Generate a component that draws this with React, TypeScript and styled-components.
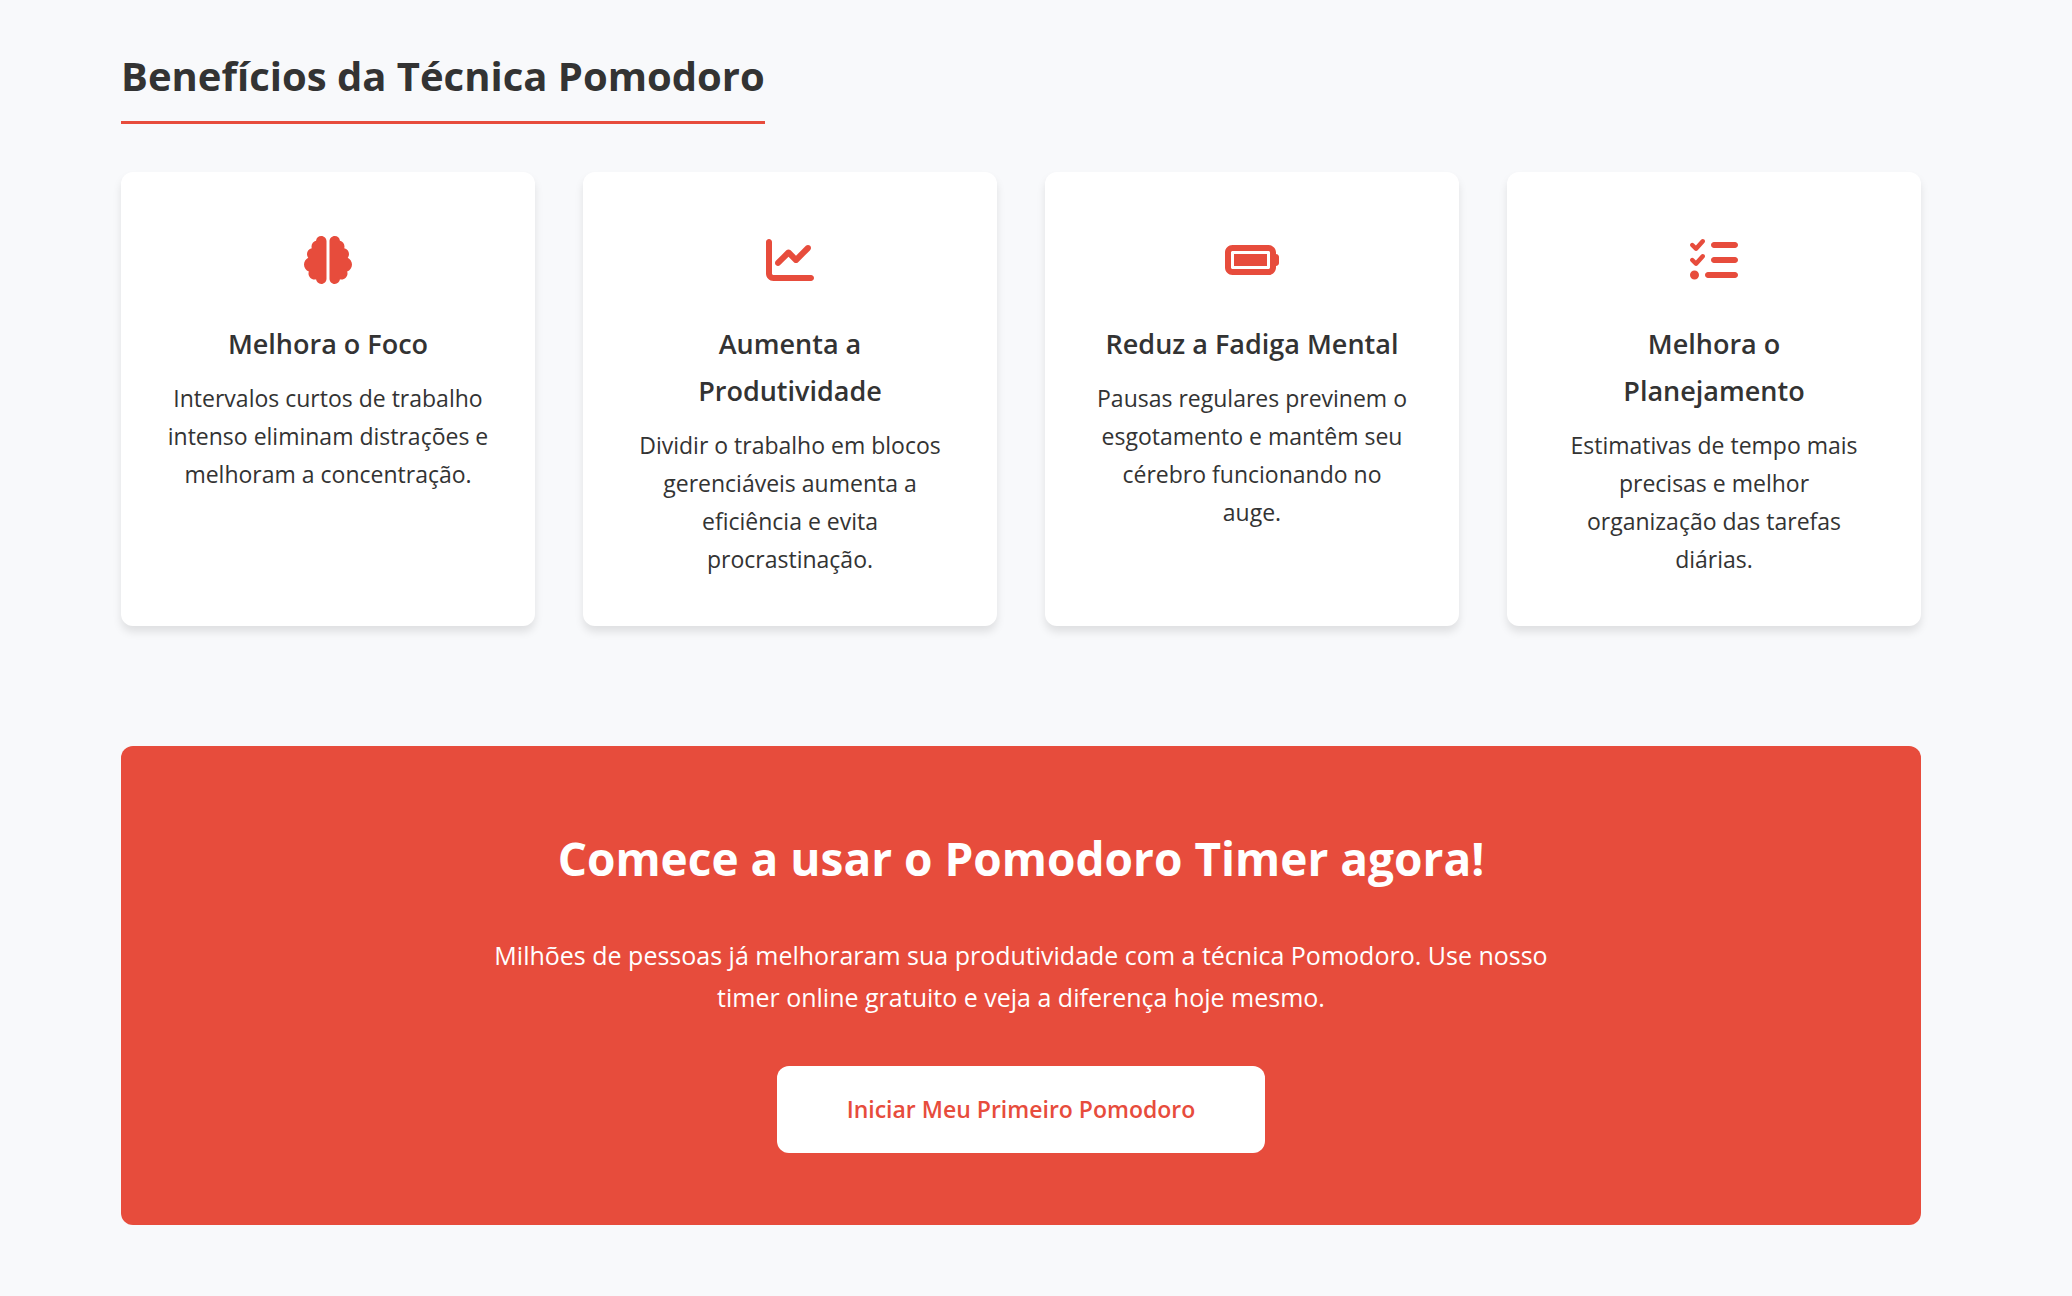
import React from "react";
import styled, { createGlobalStyle } from "styled-components";
import { FaBatteryFull, FaBrain, FaChartLine, FaListCheck } from "react-icons/fa6";
import type { IconType } from "react-icons";

const colors = {
  primary: "#e74c3c",
  text: "#333333",
  background: "#f8f9fb",
  surface: "#ffffff",
};

const GlobalStyle = createGlobalStyle`
  *, *::before, *::after {
    box-sizing: border-box;
  }

  body {
    margin: 0;
    background: ${colors.background};
    color: ${colors.text};
    font-family: "Segoe UI", "Open Sans", "Noto Sans", sans-serif;
    font-size: 23px;
    line-height: 38px;
  }
`;

const Page = styled.main`
  max-width: 1860px;
  margin: 0 auto;
  padding: 40px 45px 72px 15px;
`;

const Section = styled.section`
  margin-bottom: 120px;
`;

const SectionTitle = styled.h2`
  width: fit-content;
  margin: 0 0 48px;
  padding-bottom: 9px;
  border-bottom: 3px solid ${colors.primary};
  font-size: 40px;
  font-weight: 700;
  line-height: 72px;
`;

const BenefitGrid = styled.div`
  display: grid;
  grid-template-columns: repeat(auto-fit, minmax(375px, 1fr));
  gap: 48px;
`;

const Card = styled.article`
  padding: 48px 46px;
  border-radius: 12px;
  background: ${colors.surface};
  box-shadow: 0 6px 9px rgba(0, 0, 0, 0.1);
  text-align: center;
`;

const CardIcon = styled.div`
  display: flex;
  align-items: center;
  justify-content: center;
  height: 80px;
  margin-bottom: 20px;
  color: ${colors.primary};

  svg {
    width: 54px;
    height: 48px;
  }
`;

const CardTitle = styled.h3`
  margin: 0 0 12px;
  padding: 0 12px;
  font-size: 27px;
  font-weight: 600;
  line-height: 47px;
`;

const CardText = styled.p`
  margin: 0;
`;

const CallToAction = styled.section`
  display: flex;
  flex-direction: column;
  align-items: center;
  padding: 72px;
  border-radius: 12px;
  background: ${colors.primary};
  color: ${colors.surface};
  text-align: center;
`;

const CtaTitle = styled.h2`
  margin: 0 0 36px;
  font-size: 46px;
  font-weight: 700;
  line-height: 80px;
`;

const CtaText = styled.p`
  max-width: 1080px;
  margin: 0 0 48px;
  font-size: 25px;
  line-height: 42px;
`;

const CtaButton = styled.button`
  padding: 24px 70px;
  border: 0;
  border-radius: 12px;
  background: ${colors.surface};
  color: ${colors.primary};
  font-family: inherit;
  font-size: 23px;
  font-weight: 600;
  line-height: 39px;
  cursor: pointer;
`;

interface Benefit {
  icon: IconType;
  title: string;
  text: string;
}

const benefits: Benefit[] = [
  {
    icon: FaBrain,
    title: "Melhora o Foco",
    text: "Intervalos curtos de trabalho intenso eliminam distrações e melhoram a concentração.",
  },
  {
    icon: FaChartLine,
    title: "Aumenta a Produtividade",
    text: "Dividir o trabalho em blocos gerenciáveis aumenta a eficiência e evita procrastinação.",
  },
  {
    icon: FaBatteryFull,
    title: "Reduz a Fadiga Mental",
    text: "Pausas regulares previnem o esgotamento e mantêm seu cérebro funcionando no auge.",
  },
  {
    icon: FaListCheck,
    title: "Melhora o Planejamento",
    text: "Estimativas de tempo mais precisas e melhor organização das tarefas diárias.",
  },
];

export default function App() {
  return (
    <>
      <GlobalStyle />
      <Page>
        <Section>
          <SectionTitle>Benefícios da Técnica Pomodoro</SectionTitle>
          <BenefitGrid>
            {benefits.map(({ icon: Icon, title, text }) => (
              <Card key={title}>
                <CardIcon>
                  <Icon aria-hidden="true" />
                </CardIcon>
                <CardTitle>{title}</CardTitle>
                <CardText>{text}</CardText>
              </Card>
            ))}
          </BenefitGrid>
        </Section>
        <CallToAction>
          <CtaTitle>Comece a usar o Pomodoro Timer agora!</CtaTitle>
          <CtaText>
            Milhões de pessoas já melhoraram sua produtividade com a técnica Pomodoro. Use nosso
            timer online gratuito e veja a diferença hoje mesmo.
          </CtaText>
          <CtaButton type="button">Iniciar Meu Primeiro Pomodoro</CtaButton>
        </CallToAction>
      </Page>
    </>
  );
}
